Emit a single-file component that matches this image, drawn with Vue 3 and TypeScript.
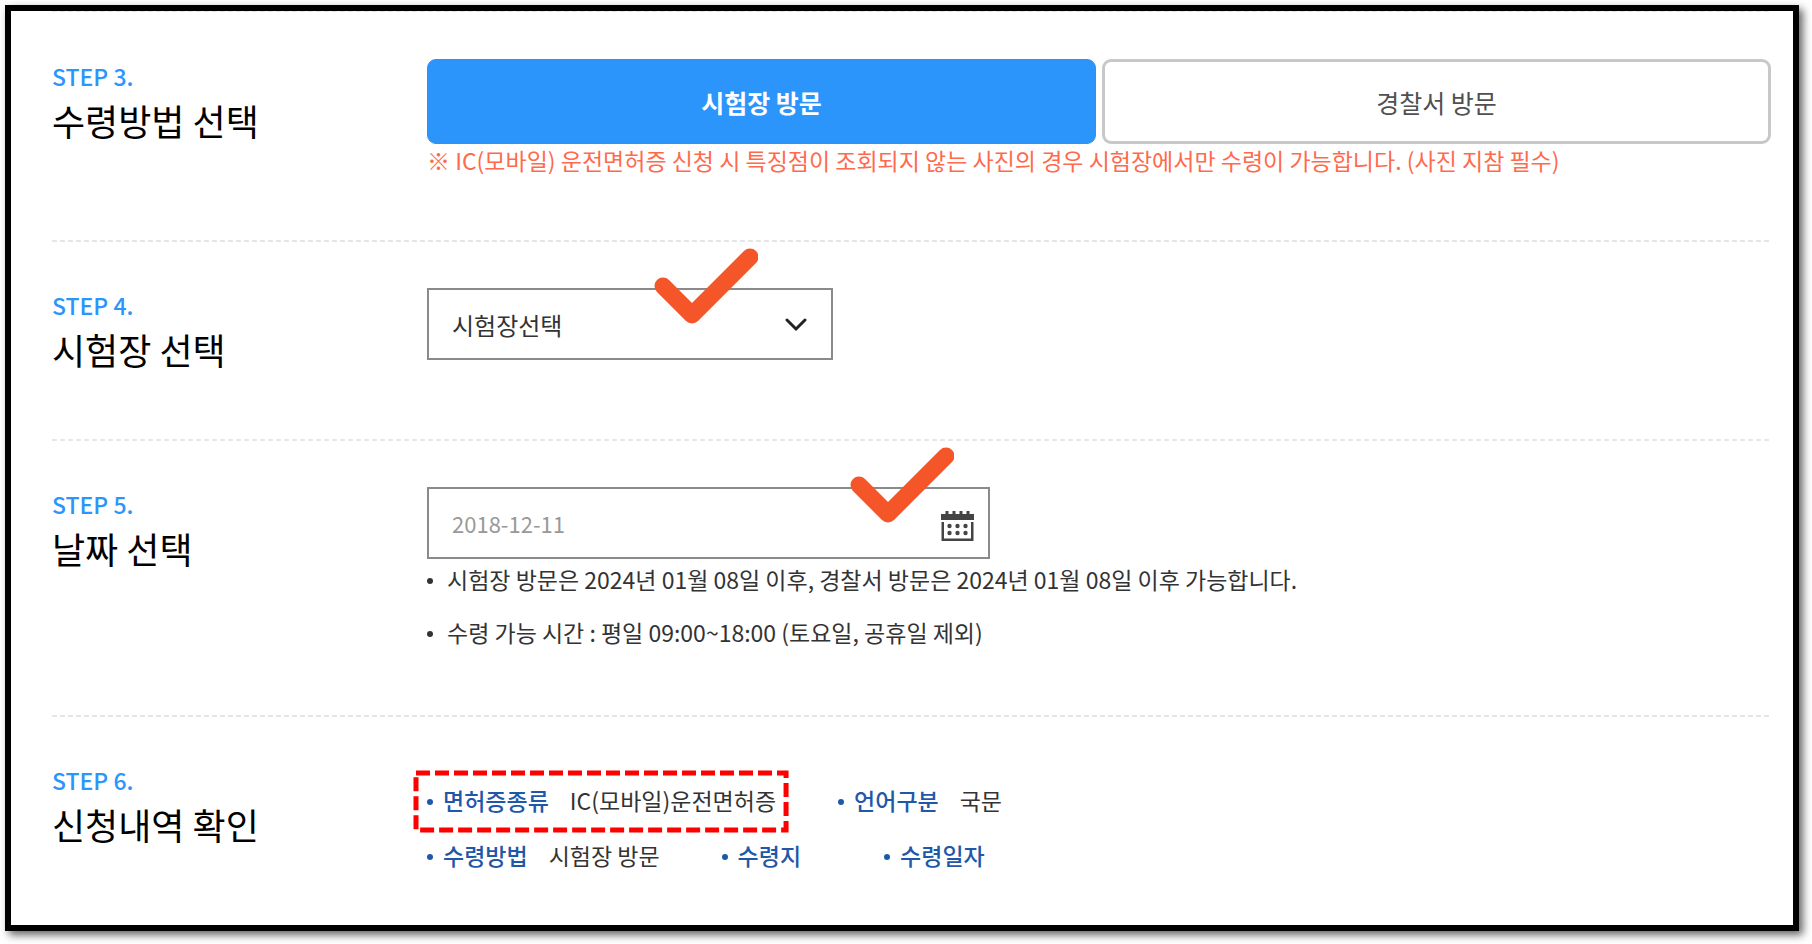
<script setup lang="ts">
import { ref } from 'vue'

type Method = 'center' | 'police'

interface SummaryItem {
  label: string
  value: string
  marked?: boolean
}

const method = ref<Method>('center')
const methods: { id: Method; label: string }[] = [
  { id: 'center', label: '시험장 방문' },
  { id: 'police', label: '경찰서 방문' },
]

const place = ref('')
const pickupDate = ref('2018-12-11')

const notes: string[] = [
  '시험장 방문은 2024년 01월 08일 이후, 경찰서 방문은 2024년 01월 08일 이후 가능합니다.',
  '수령 가능 시간 : 평일 09:00~18:00 (토요일, 공휴일 제외)',
]

const summary: SummaryItem[][] = [
  [
    { label: '면허증종류', value: 'IC(모바일)운전면허증', marked: true },
    { label: '언어구분', value: '국문' },
  ],
  [
    { label: '수령방법', value: '시험장 방문' },
    { label: '수령지', value: '' },
    { label: '수령일자', value: '' },
  ],
]
</script>

<template>
  <div class="page">
    <main class="frame">
      <section class="step">
        <header class="step-head">
          <p class="step-no">STEP 3.</p>
          <h2 class="step-title">수령방법 선택</h2>
        </header>
        <div class="step-body">
          <div class="methods">
            <button
              v-for="m in methods"
              :key="m.id"
              type="button"
              class="method"
              :class="{ active: method === m.id }"
              :aria-pressed="method === m.id"
              @click="method = m.id"
            >
              {{ m.label }}
            </button>
          </div>
          <p class="warning">※ IC(모바일) 운전면허증 신청 시 특징점이 조회되지 않는 사진의 경우 시험장에서만 수령이 가능합니다. (사진 지참 필수)</p>
        </div>
      </section>

      <section class="step">
        <header class="step-head">
          <p class="step-no">STEP 4.</p>
          <h2 class="step-title"><label for="place">시험장 선택</label></h2>
        </header>
        <div class="step-body">
          <div class="field field-place">
            <select id="place" v-model="place" class="control">
              <option value="">시험장선택</option>
            </select>
            <svg class="chevron" viewBox="0 0 22 14" aria-hidden="true">
              <path d="M2 2l9 9 9-9" fill="none" stroke="#222" stroke-width="3" stroke-linecap="round" />
            </svg>
            <svg class="check check-place" viewBox="0 0 104 76" aria-hidden="true">
              <path d="M9 38l29 29 58-58" />
            </svg>
          </div>
        </div>
      </section>

      <section class="step">
        <header class="step-head">
          <p class="step-no">STEP 5.</p>
          <h2 class="step-title"><label for="date">날짜 선택</label></h2>
        </header>
        <div class="step-body">
          <div class="field field-date">
            <input id="date" v-model="pickupDate" type="text" class="control date" />
            <button type="button" class="calendar" aria-label="달력 열기">
              <svg viewBox="0 0 33 30" aria-hidden="true">
                <g fill="#444">
                  <path d="M0 3h4.500V0h3v3h4V0h3v3h4V0h3v3h4V0h3v3H33v6H0z" />
                  <path d="M.500 11H3v16.500h27V11h2.500v19H.500z" />
                  <circle cx="8.500" cy="15" r="2.200" />
                  <circle cx="16.500" cy="15" r="2.200" />
                  <circle cx="24.500" cy="15" r="2.200" />
                  <circle cx="8.500" cy="22" r="2.200" />
                  <circle cx="16.500" cy="22" r="2.200" />
                  <circle cx="24.500" cy="22" r="2.200" />
                </g>
              </svg>
            </button>
            <svg class="check check-date" viewBox="0 0 104 76" aria-hidden="true">
              <path d="M9 38l29 29 58-58" />
            </svg>
          </div>
          <ul class="notes">
            <li v-for="note in notes" :key="note">{{ note }}</li>
          </ul>
        </div>
      </section>

      <section class="step">
        <header class="step-head">
          <p class="step-no">STEP 6.</p>
          <h2 class="step-title">신청내역 확인</h2>
        </header>
        <div class="step-body summary">
          <dl v-for="(row, i) in summary" :key="i" class="summary-row">
            <div v-for="item in row" :key="item.label" class="summary-item">
              <dt>{{ item.label }}</dt>
              <dd>{{ item.value }}</dd>
              <svg v-if="item.marked" class="mark" aria-hidden="true">
                <rect width="100%" height="100%" />
              </svg>
            </div>
          </dl>
        </div>
      </section>
    </main>
  </div>
</template>

<style>
body {
  margin: 0;
  background: #fff;
}
</style>

<style scoped>
.page {
  display: flex;
  box-sizing: border-box;
  min-height: 100vh;
  padding: 5px 13px 13px 5px;
}

.frame {
  box-sizing: border-box;
  flex: 1;
  min-width: 0;
  padding: 0 22px 0 41px;
  border: 6px solid #000;
  background: #fff;
  box-shadow: 4px 4px 8px rgba(0, 0, 0, 0.6);
  font-family: "Noto Sans CJK KR", "Noto Sans", sans-serif;
  font-size: 23px;
  color: #333;
}

p,
h2,
ul,
dl,
dd {
  margin: 0;
  padding: 0;
}

.step {
  display: grid;
  grid-template-columns: 375px 1fr;
  padding: 48px 0 61px;
  background: repeating-linear-gradient(90deg, #e6e6e6 0 5px, transparent 5px 8px) top / 100% 2px no-repeat;
}

.step:first-child {
  background-size: 100% 1px;
}

.step:last-child {
  padding-bottom: 44px;
}

.step-head {
  min-height: 90px;
}

.step-no {
  font-size: 23px;
  font-weight: 500;
  line-height: 35px;
  color: #2b95fc;
}

.step-title {
  font-size: 36px;
  font-weight: 400;
  line-height: 53px;
  color: #000;
}

.methods {
  display: grid;
  grid-template-columns: 1fr 1fr;
  gap: 6px;
}

.method {
  height: 85px;
  border: 3px solid #c8c8c8;
  border-radius: 9px;
  background: #fff;
  font: inherit;
  font-size: 25px;
  color: #505050;
}

.method.active {
  border: 1px solid #3a8fdf;
  background: #2b95fc;
  font-weight: 700;
  color: #fff;
}

.warning {
  padding-bottom: 2px;
  line-height: 33px;
  color: #ff6a4d;
}

.field {
  position: relative;
  height: 72px;
}

.field-place {
  max-width: 406px;
}

.field-date {
  max-width: 563px;
}

.control {
  box-sizing: border-box;
  width: 100%;
  height: 100%;
  padding: 0 23px;
  border: 2px solid #8a8a8a;
  border-radius: 0;
  background: #fff;
  appearance: none;
  font: inherit;
  font-size: 24px;
  color: #333;
}

.control.date {
  font-size: 22px;
  color: #999;
}

.chevron {
  position: absolute;
  top: 30px;
  right: 26px;
  width: 22px;
  height: 14px;
  pointer-events: none;
}

.calendar {
  position: absolute;
  top: 24px;
  right: 16px;
  width: 33px;
  height: 30px;
  padding: 0;
  border: 0;
  background: none;
}

.calendar svg {
  display: block;
}

.check {
  position: absolute;
  top: -40px;
  width: 104px;
  height: 76px;
  pointer-events: none;
}

.check path {
  fill: none;
  stroke: #f45529;
  stroke-width: 17;
  stroke-linecap: round;
  stroke-linejoin: round;
}

.check-place {
  right: 75px;
}

.check-date {
  right: 36px;
}

.notes {
  display: grid;
  gap: 13px;
  padding-bottom: 2px;
  line-height: 40px;
  list-style: none;
}

.notes li,
.summary-item {
  display: flex;
  align-items: center;
}

.notes li::before,
.summary-item::before {
  content: "";
  flex: none;
  width: 6px;
  height: 6px;
  margin: 4px 14px 0 0;
  border-radius: 50%;
  background: currentColor;
}

.summary {
  display: grid;
  gap: 15px;
  padding-top: 17px;
  line-height: 40px;
}

.summary-row {
  display: flex;
  gap: 62px;
}

.summary-item {
  position: relative;
  color: #1f58a9;
}

.summary-item::before {
  margin-right: 10px;
}

.summary dt {
  margin-right: 21px;
  font-weight: 500;
}

.summary dd {
  color: #333;
}

.mark {
  position: absolute;
  top: -7px;
  left: -11px;
  width: calc(100% + 21px);
  height: 57px;
  overflow: visible;
  pointer-events: none;
}

.mark rect {
  fill: none;
  stroke: #f00;
  stroke-width: 5;
  stroke-dasharray: 14 5;
}
</style>
